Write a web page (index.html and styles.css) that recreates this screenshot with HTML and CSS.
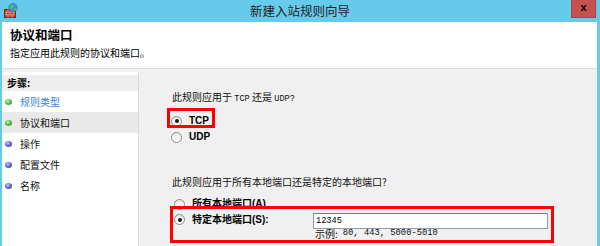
FILE: index.html
```html
<!DOCTYPE html>
<html lang="zh-CN">
<head>
<meta charset="utf-8">
<link rel="stylesheet" href="styles.css">
</head>
<body>
<div class="window">
  <div class="titlebar">
    <div class="app-icon">
      <svg width="14" height="15" viewBox="0 0 14 15">
        <rect x="0.5" y="6.5" width="11" height="8" fill="#b4432e" stroke="#7a2a1c" stroke-width="1"/>
        <path d="M1 9.2H11M1 11.8H11M4 6.5V9.2M8 6.5V9.2M2.5 9.2V11.8M6 9.2V11.8M9.5 9.2V11.8M4 11.8V14.5M8 11.8V14.5" stroke="#e7a58e" stroke-width="0.8" fill="none"/>
        <circle cx="9" cy="4.6" r="4.2" fill="#3a8fe0" stroke="#2a6fb0" stroke-width="0.6"/>
        <path d="M6.2 3.2C7 1.8 8.6 1.4 9.6 2.2C10.4 2.9 9.2 3.8 8.4 4.4C7.6 5 7.8 6.4 7 6.6C6 6.2 5.6 4.4 6.2 3.2Z" fill="#5fc24a"/>
        <path d="M10.6 5.2C11.4 4.8 12.6 5 12.8 5.8C12.4 7.2 11.2 8.2 10.4 7.8C10 7 10 5.6 10.6 5.2Z" fill="#5fc24a"/>
      </svg>
    </div>
    <div class="title">新建入站规则向导</div>
    <div class="close">x</div>
  </div>
  <div class="client">
    <div class="header">
      <div class="h1">协议和端口</div>
      <div class="sub">指定应用此规则的协议和端口。</div>
    </div>
    <div class="main">
      <div class="steps">
        <div class="steps-head">步骤:</div>
        <div class="step link"><span class="dot green"></span>规则类型</div>
        <div class="step current"><span class="dot green"></span>协议和端口</div>
        <div class="step"><span class="dot blue"></span>操作</div>
        <div class="step"><span class="dot blue"></span>配置文件</div>
        <div class="step"><span class="dot blue"></span>名称</div>
      </div>
      <div class="content">
        <p class="q">此规则应用于 <span class="lat">TCP</span> 还是 <span class="lat">UDP?</span></p>
        <div class="radios r1">
          <div class="opt"><span class="radio checked"></span><span class="lbl">TCP</span></div>
          <div class="opt"><span class="radio"></span><span class="lbl">UDP</span></div>
        </div>
        <p class="q q2">此规则应用于所有本地端口还是特定的本地端口?</p>
        <div class="radios r2">
          <div class="opt"><span class="radio"></span><span class="lbl">所有本地端口(A)</span></div>
          <div class="opt port-row">
            <span class="radio checked"></span>
            <span class="lbl port-lbl">特定本地端口(S):</span>
            <div class="port-field">
              <div class="input">12345</div>
              <div class="hint"><span>示例:</span><span class="lat hint-lat">80, 443, 5000-5010</span></div>
            </div>
          </div>
        </div>
        <div class="mark mark1"></div>
        <div class="mark mark2"></div>
      </div>
    </div>
  </div>
</div>
</body>
</html>
```

FILE: styles.css
```css
html, body {
  margin: 0;
  padding: 0;
}
body {
  width: 600px;
  height: 246px;
  overflow: hidden;
  background: #66caea;
  font-family: "Noto Sans CJK SC", "Liberation Sans", sans-serif;
  color: #111;
}
.window {
  height: 246px;
  display: flex;
  flex-direction: column;
}
.titlebar {
  height: 22px;
  flex: none;
  display: grid;
  grid-template-columns: 40px 1fr 40px;
  align-items: start;
}
.app-icon {
  padding: 3px 0 0 4px;
  height: 15px;
}
.app-icon svg {
  display: block;
}
.title {
  text-align: center;
  font-size: 12.5px;
  line-height: 22px;
  color: #1e1e1e;
}
.close {
  justify-self: end;
  margin-right: 4px;
  width: 25px;
  height: 18px;
  box-sizing: border-box;
  background: #c75050;
  border: 1px solid #a84444;
  border-top: none;
  color: #000;
  font: bold 11px/15px "Liberation Sans", sans-serif;
  text-align: center;
}
.client {
  flex: 1;
  min-height: 0;
  margin: 0 3px 0 2px;
  display: flex;
  flex-direction: column;
  background: #f0f0f0;
}
.header {
  flex: none;
  height: 47px;
  box-sizing: border-box;
  background: #fff;
  border-bottom: 1px solid #dedede;
  padding: 5px 0 0 8px;
}
.h1 {
  font-size: 12.5px;
  font-weight: bold;
  line-height: 16px;
  color: #000;
}
.sub {
  font-size: 10px;
  line-height: 14px;
  margin-top: 3px;
  color: #000;
}
.main {
  flex: 1;
  min-height: 0;
  display: flex;
}
.steps {
  width: 136px;
  flex: none;
  margin-top: 3px;
  padding-top: 3px;
  background: #fff;
  border-right: 1px solid #dadada;
}
.steps-head {
  height: 16px;
  line-height: 16px;
  padding-left: 5px;
  font-size: 10px;
  font-weight: bold;
  background: #eeeeee;
  color: #000;
}
.step {
  height: 21px;
  display: flex;
  align-items: center;
  padding-left: 3px;
  font-size: 10px;
  color: #111;
}
.step.current {
  background: #e9e9e9;
}
.step.link {
  color: #3a7fd5;
}
.dot {
  width: 7px;
  height: 6px;
  border-radius: 50%;
  margin-right: 8px;
}
.dot.green {
  background: radial-gradient(circle at 40% 35%, #c8f5b0 0, #4cc24a 45%, #2d8f2d 100%);
}
.dot.blue {
  background: radial-gradient(circle at 40% 35%, #d0d0fa 0, #6464d4 45%, #3a3a9e 100%);
}
.content {
  flex: 1;
  position: relative;
  padding: 20px 0 0 33px;
  font-size: 10px;
}
.q {
  margin: 0;
  line-height: 16px;
  color: #111;
}
.lat {
  font-family: "Liberation Mono", monospace;
  font-size: 8.6px;
}
.hint-lat {
  font-size: 8.8px;
  margin-left: 5px;
}
.radios {
  display: flex;
  flex-direction: column;
}
.r1 {
  margin: 6px 0 0 -1px;
}
.q2 {
  margin-top: 29px;
}
.r2 {
  margin: 6px 0 0 2px;
}
.opt {
  display: flex;
  align-items: center;
  height: 16px;
}
.radio {
  flex: none;
  width: 11px;
  height: 11px;
  box-sizing: border-box;
  border-radius: 50%;
  border: 1px solid #8b8b8b;
  background: linear-gradient(#e8e8e8, #ffffff);
  margin-right: 7px;
  position: relative;
}
.radio.checked::after {
  content: "";
  position: absolute;
  left: 2.5px;
  top: 2.5px;
  width: 4px;
  height: 4px;
  border-radius: 50%;
  background: #1a1a1a;
}
.lbl {
  font-family: "Liberation Sans", "Noto Sans CJK SC", sans-serif;
  font-weight: bold;
  font-size: 10px;
  line-height: 16px;
  color: #000;
}
.port-row {
  align-items: flex-start;
  height: auto;
}
.port-row .radio {
  margin-top: 2px;
}
.port-lbl {
  width: 121px;
  flex: none;
}
.port-field {
  display: flex;
  flex-direction: column;
}
.input {
  width: 235px;
  height: 16px;
  box-sizing: border-box;
  margin-top: 1px;
  border: 1px solid #8a9bb3;
  border-top-color: #6f7f97;
  background: #fff;
  font-family: "Liberation Mono", monospace;
  font-size: 8.6px;
  line-height: 14px;
  padding-left: 2px;
  color: #000;
}
.hint {
  display: flex;
  align-items: center;
  height: 11px;
  font-size: 10px;
  line-height: 11px;
  padding-left: 2px;
  margin-top: -1px;
  color: #111;
}
.mark {
  position: absolute;
  box-sizing: border-box;
  border: 3px solid #ff0000;
}
.mark1 {
  left: 28px;
  top: 39px;
  width: 48px;
  height: 20px;
}
.mark2 {
  left: 31px;
  top: 137px;
  width: 384px;
  height: 37px;
}
```
